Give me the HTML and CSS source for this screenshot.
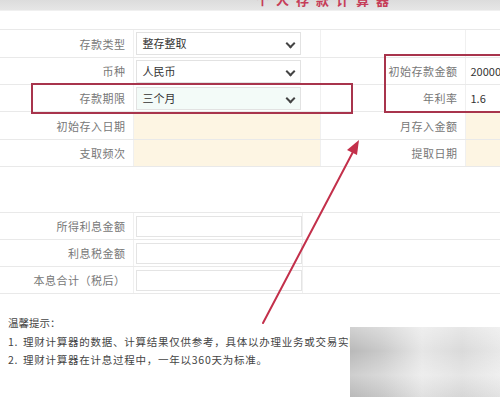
FILE: index.html
```html
<!DOCTYPE html>
<html lang="zh-CN">
<head>
    <meta charset="UTF-8">
    <meta name="viewport" content="width=device-width, initial-scale=1.0">
    <title>个人存款计算器</title>
    <link rel="stylesheet" href="styles.css">
</head>
<body>
    <div class="page">
        <div class="topbar">
            <h1>个人存款计算器</h1>
        </div>

        <table class="calc">
            <colgroup>
                <col class="c-label">
                <col class="c-field">
                <col class="c-label2">
                <col class="c-field2">
            </colgroup>
            <tr class="r1">
                <th>存款类型</th>
                <td><div class="select">整存整取<span class="chev"></span></div></td>
                <th></th>
                <td></td>
            </tr>
            <tr class="r2">
                <th>币种</th>
                <td><div class="select">人民币<span class="chev"></span></div></td>
                <th>初始存款金额</th>
                <td class="val">20000</td>
            </tr>
            <tr class="r3">
                <th>存款期限</th>
                <td><div class="select active">三个月<span class="chev"></span></div></td>
                <th>年利率</th>
                <td class="val">1.6</td>
            </tr>
            <tr class="r4">
                <th>初始存入日期</th>
                <td class="fill"></td>
                <th>月存入金额</th>
                <td class="fill"></td>
            </tr>
            <tr class="r5">
                <th>支取频次</th>
                <td class="fill"></td>
                <th>提取日期</th>
                <td class="fill"></td>
            </tr>
        </table>

        <table class="result">
            <colgroup>
                <col class="c-label">
                <col class="c-out">
                <col>
            </colgroup>
            <tr>
                <th>所得利息金额</th>
                <td><div class="box"></div></td>
                <td></td>
            </tr>
            <tr>
                <th>利息税金额</th>
                <td><div class="box"></div></td>
                <td></td>
            </tr>
            <tr>
                <th>本息合计（税后）</th>
                <td><div class="box"></div></td>
                <td></td>
            </tr>
        </table>

        <div class="tips">
            <p>温馨提示：</p>
            <ol>
                <li><span>1.</span>理财计算器的数据、计算结果仅供参考，具体以办理业务或交易实际结果为准。</li>
                <li><span>2.</span>理财计算器在计息过程中，一年以360天为标准。</li>
            </ol>
        </div>

        <!-- annotations drawn over the screenshot -->
        <div class="mark mark-term"></div>
        <div class="mark mark-amount"></div>
        <svg class="arrow" width="500" height="397" viewBox="0 0 500 397">
            <line x1="263" y1="323" x2="354" y2="150" stroke="#c3304b" stroke-width="2" stroke-linecap="round"/>
            <polygon points="359,140 347,150 357,155" fill="#c3304b"/>
        </svg>
        <div class="blur"></div>
    </div>
</body>
</html>
```

FILE: styles.css
```css
body {
    margin: 0;
    background: #fff;
    font-family: "Noto Sans CJK SC", "Liberation Sans", sans-serif;
    color: #555;
}

.page {
    position: relative;
    width: 500px;
    height: 397px;
    overflow: hidden;
    background: #fff;
}

.topbar {
    height: 10px;
    overflow: hidden;
    background: linear-gradient(#dcdcdc, #e6e6e6);
    border-bottom: 1px solid #f0f0f0;
}

.topbar h1 {
    margin: -8px 0 0 256px;
    font-size: 13px;
    line-height: 16px;
    letter-spacing: 7px;
    font-weight: bold;
    color: #c63d58;
}

.calc, .result {
    border-collapse: collapse;
    table-layout: fixed;
    width: 560px;
    font-size: 11px;
}

.calc {
    margin-top: 18px;
}

.result {
    margin-top: 45px;
}

.c-label { width: 133px; }
.c-field { width: 187px; }
.c-label2 { width: 145px; }
.c-field2 { width: 95px; }
.c-out { width: 169px; }

.calc th, .calc td, .result th, .result td {
    height: 26px;
    padding: 0;
    border-top: 1px solid #e9e9e9;
    border-bottom: 1px solid #e9e9e9;
    border-left: 1px solid #f0f0f0;
}

.calc th, .result th {
    text-align: right;
    font-weight: normal;
    padding-right: 7px;
    color: #777;
    letter-spacing: 0.5px;
}

.calc th:first-child, .result th:first-child {
    border-left: none;
}

.calc .r1 th, .calc .r1 td {
    height: 27px;
}

.calc .r4 th, .calc .r4 td {
    height: 27px;
}

.select {
    position: relative;
    width: 157px;
    height: 21px;
    margin-left: 2px;
    padding-left: 6px;
    line-height: 21px;
    border: 1px solid #e2e2e2;
    background: #fff;
    color: #333;
}

.select.active {
    background: #f3fbf8;
}

.chev {
    position: absolute;
    right: 6px;
    top: 7px;
    width: 5px;
    height: 5px;
    border-right: 2px solid #444;
    border-bottom: 2px solid #444;
    transform: rotate(45deg);
}

.val {
    padding-left: 5px !important;
    color: #333;
}

.fill {
    background: #fdf5e3;
}

.box {
    width: 164px;
    height: 19px;
    margin-left: 2px;
    border: 1px solid #e4e4e4;
    background: #fff;
}

.tips {
    margin-top: 20px;
    padding-left: 8px;
    font-size: 10.5px;
    color: #444;
}

.tips p {
    margin: 0 0 1px;
    line-height: 18px;
}

.tips ol {
    list-style: none;
    margin: 0;
    padding: 0;
}

.tips li {
    line-height: 18px;
    white-space: nowrap;
    letter-spacing: 0.75px;
}

.tips li span {
    display: inline-block;
    width: 15px;
}

.mark {
    position: absolute;
    border: 2px solid #a8344c;
    box-sizing: border-box;
}

.mark-term {
    left: 31px;
    top: 83px;
    width: 322px;
    height: 31px;
}

.mark-amount {
    left: 384px;
    top: 54px;
    width: 130px;
    height: 59px;
}

.arrow {
    position: absolute;
    left: 0;
    top: 0;
}

.blur {
    position: absolute;
    left: 350px;
    top: 327px;
    width: 160px;
    height: 80px;
    background:
        linear-gradient(180deg, rgba(255,255,255,0.35) 0%, rgba(255,255,255,0) 30%, rgba(255,255,255,0.3) 60%, rgba(0,0,0,0.05) 100%),
        linear-gradient(90deg, #b9b9b9 0%, #c9c9c9 20%, #e6e6e6 45%, #dadada 70%, #ececec 100%);
}
```
